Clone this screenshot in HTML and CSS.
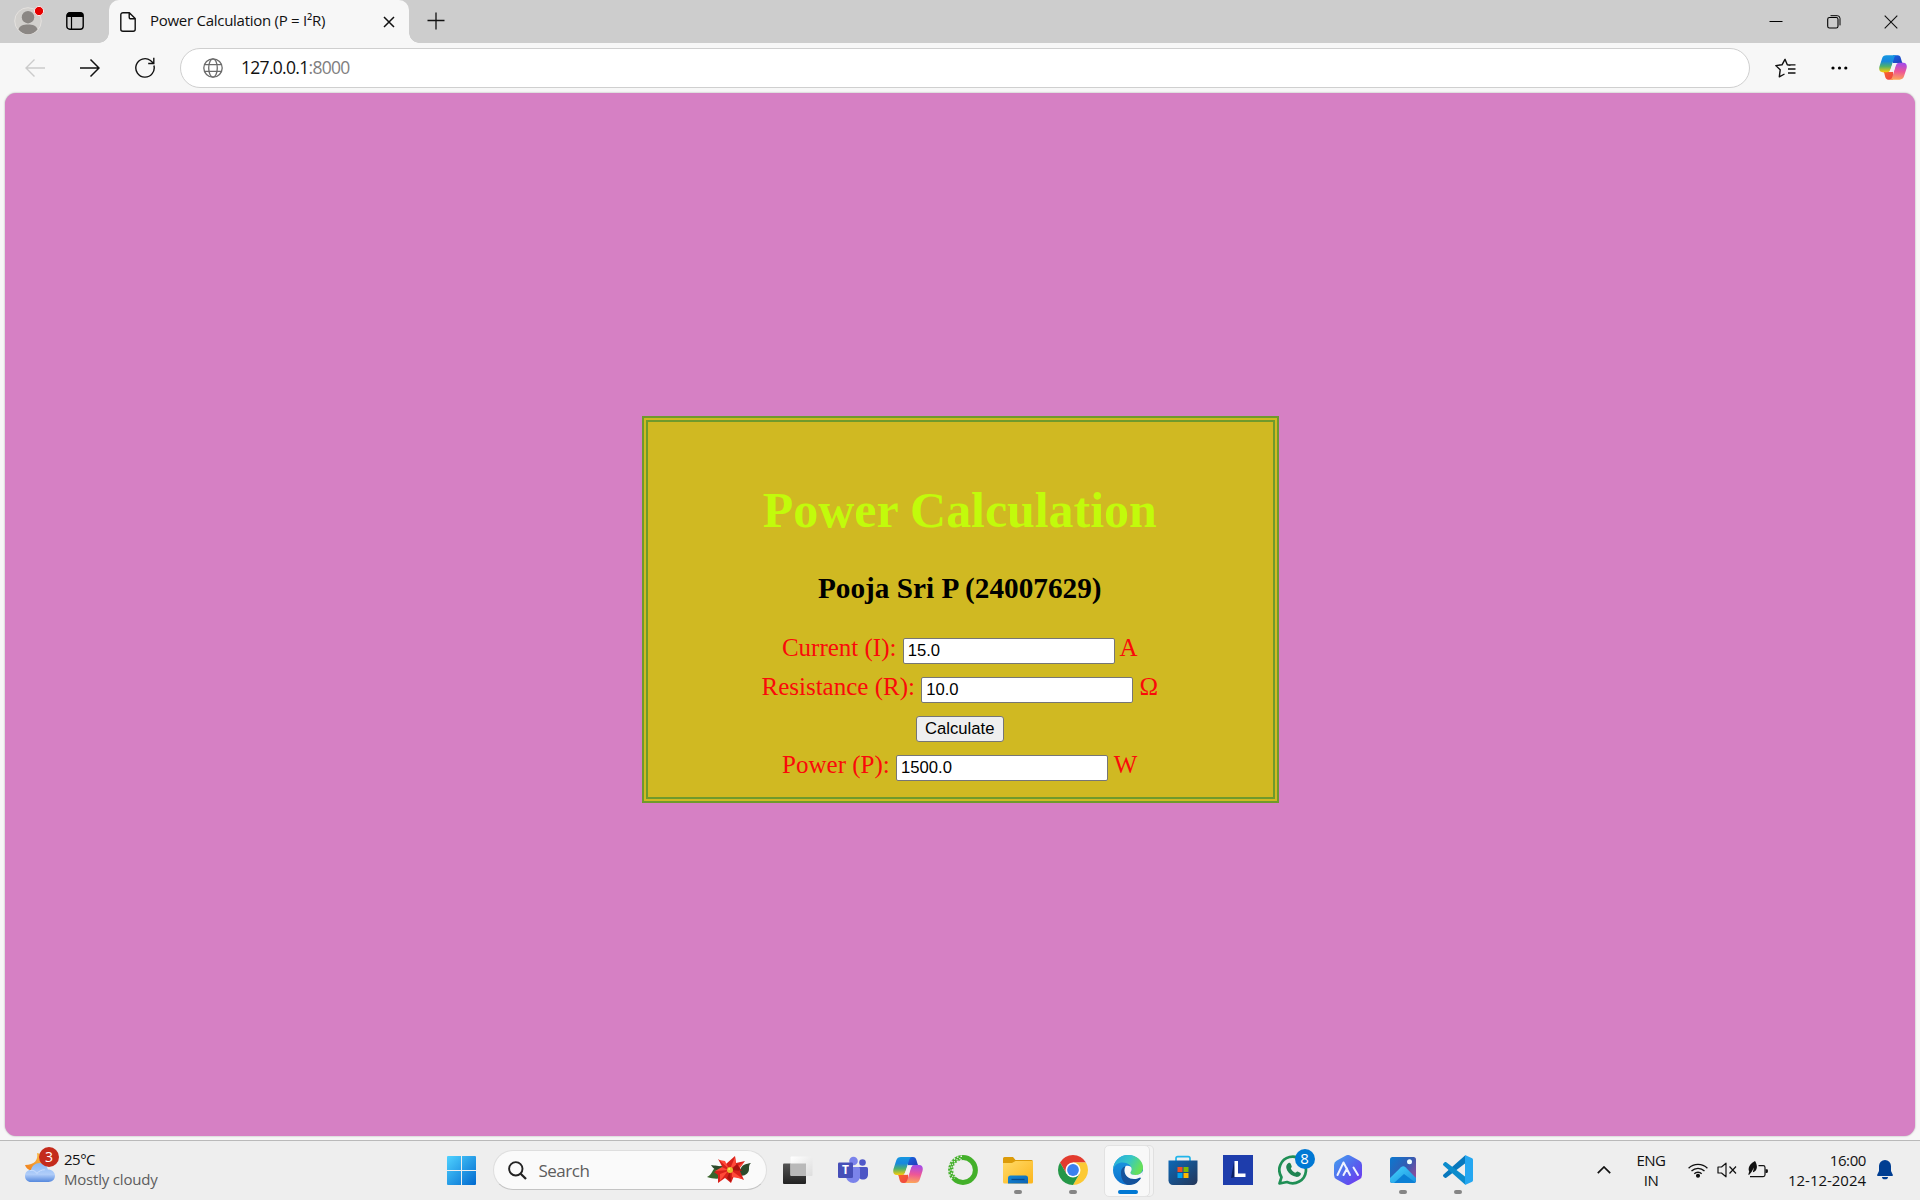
FILE: index.html
```html
<!DOCTYPE html>
<html lang="en">
<head>
<meta charset="utf-8">
<title>Power Calculation (P = I²R)</title>
<link rel="stylesheet" href="styles.css">
</head>
<body>
<svg class="defs" width="0" height="0" aria-hidden="true">
  <defs>
    <linearGradient id="cpBlue" x1="0" y1="0" x2="0" y2="1"><stop offset="0" stop-color="#1698e0"/><stop offset=".35" stop-color="#1787df"/><stop offset=".65" stop-color="#4cb06d"/><stop offset="1" stop-color="#fccb08"/></linearGradient>
    <linearGradient id="cpPink" x1=".4" y1="0" x2=".3" y2="1"><stop offset="0" stop-color="#a54ce8"/><stop offset=".5" stop-color="#ee5697"/><stop offset="1" stop-color="#fda957"/></linearGradient>
    <linearGradient id="cpNavy" x1="0" y1="0" x2="1" y2="1"><stop offset="0" stop-color="#1764e0"/><stop offset="1" stop-color="#2339b5"/></linearGradient>
    <linearGradient id="cpRed" x1="0" y1="0" x2="1" y2="1"><stop offset="0" stop-color="#f8672e"/><stop offset="1" stop-color="#ee4343"/></linearGradient>
    <symbol id="copilot" viewBox="0 0 30 28">
      <path d="M15 1h5c2 0 2.800 1 3.400 3l1.200 4c.4 1 .8 1.400 1.700 1.500H15z" fill="url(#cpNavy)"/>
      <path d="M15 27h-5c-2 0-2.800-1-3.400-3l-1-4c-.4-1-.8-1.400-1.700-1.500H15z" fill="url(#cpRed)"/>
      <path d="M8 1h11.500c-2 0-2.800 1.200-3.500 3.500l-3.500 11c-.7 2-1.600 3.500-4 3.500H3.800C.8 19-.4 16.500.5 13l2.700-8.500C4 2 5.500 1 8 1z" fill="url(#cpBlue)"/>
      <path d="M22 27H11c2 0 2.800-1.200 3.500-3.500l3.300-11c.7-2 1.600-3.500 4-3.500h4.400c3 0 4.200 2.500 3.300 6l-2.700 8.500C26 26 24.500 27 22 27z" fill="url(#cpPink)"/>
      <path d="M14.800 9.300H20c-1.400.5-2 1.700-2.500 3.200l-1.300 4.300c-.4 1.200-1.200 1.900-2.400 1.900h-3.200c1-.6 1.500-1.800 1.900-3.200z" fill="#f4f1f3"/>
    </symbol>
  </defs>
</svg>

<header class="tabstrip">
  <svg class="avatar" width="32" height="32" viewBox="0 0 32 32"><circle cx="16" cy="16" r="13.300" fill="#d2d0cd" stroke="#e5e2df"/><circle cx="16" cy="12.200" r="6.200" fill="#8b8784"/><path d="M6.500 24.500c1-4 4.800-5 9.500-5s8.500 1 9.500 5c-2.300 3-5.700 4.800-9.500 4.800s-7.200-1.800-9.500-4.800z" fill="#8b8784"/><circle cx="27" cy="6" r="4.600" fill="#e60000" stroke="#fbe8e8"/></svg>
  <svg class="workspace" width="18" height="18" viewBox="0 0 18 18"><rect x=".8" y=".8" width="16.400" height="16.400" rx="3" fill="none" stroke="#000" stroke-width="1.400"/><path d="M1 5V3a2.500 2.500 0 0 1 2.500-2.500h11A2.500 2.500 0 0 1 17 3v2z" fill="#000"/><path d="M5.500 5v12" stroke="#000" stroke-width="1.200"/></svg>
  <div class="tab">
    <svg width="16" height="20" viewBox="0 0 16 20"><path d="M3 .7h6.300L15.200 6.500v10.800c0 1.100-.9 2-2 2H3c-1.200 0-2.200-.9-2.200-2V2.700C.8 1.600 1.800.7 3 .7zM9.200.9v4c0 1.200.6 1.900 1.800 1.900h4" fill="none" stroke="#111" stroke-width="1.400"/></svg>
    <span class="tab-title">Power Calculation (P = I²R)</span>
    <svg class="tab-close" width="12" height="12" viewBox="0 0 12 12"><path d="M1 1l10 10M11 1L1 11" stroke="#111" stroke-width="1.500"/></svg>
  </div>
  <svg class="newtab" width="18" height="18" viewBox="0 0 18 18"><path d="M9 .5v17M.5 8.500h17" stroke="#111" stroke-width="1.300"/></svg>
  <div class="window-controls">
    <svg width="14" height="14" viewBox="0 0 14 14"><path d="M.5 6.500h13" stroke="#000"/></svg>
    <svg width="14" height="14" viewBox="0 0 14 14"><rect x=".7" y="2.500" width="10.300" height="10.500" rx="1.800" fill="none" stroke="#000" stroke-width="1.100"/><path d="M3.500.7h6.800a2.700 2.700 0 0 1 2.700 2.700v7" fill="none" stroke="#000"/></svg>
    <svg width="14" height="14" viewBox="0 0 14 14"><path d="M.7 .7l12.600 12.600M13.300.7L.7 13.300" stroke="#111" stroke-width="1.100"/></svg>
  </div>
</header>

<nav class="toolbar">
  <svg width="20" height="20" viewBox="0 0 20 20"><path d="M20 10H1M9.500 1.500L1 10l8.500 8.500" fill="none" stroke="#cbcbcb" stroke-width="1.400"/></svg>
  <svg width="20" height="20" viewBox="0 0 20 20"><path d="M0 10h19M10.500 1.500L19 10l-8.500 8.500" fill="none" stroke="#111" stroke-width="1.500"/></svg>
  <svg width="20" height="21" viewBox="0 0 20 21"><path d="M18.900 8.500A9.200 9.200 0 1 1 15.500 3.500L18.500 6.200M18.800.8v5.700h-5.600" fill="none" stroke="#111" stroke-width="1.400"/></svg>
  <div class="address">
    <svg width="20" height="20" viewBox="0 0 20 20" fill="none" stroke="#6b6b6b" stroke-width="1.300"><circle cx="10" cy="10" r="9.200"/><ellipse cx="10" cy="10" rx="4.300" ry="9.200"/><path d="M1.500 6.600h17M1.500 13.400h17"/></svg>
    <span class="url">127.0.0.1<span class="port">:8000</span></span>
  </div>
  <svg class="fav" width="21" height="20" viewBox="0 0 21 20" fill="none" stroke="#111" stroke-width="1.400" stroke-linejoin="round"><path d="M15.500 7.300l-3.200-.6L10 1.300 7 6.800l-6.200.8 4.400 4.200-.9 7L9.500 16M12.700 6.900H20.500M13 11h7.500M13 15h7.500"/></svg>
  <svg class="dots" width="17" height="4" viewBox="0 0 17 4"><circle cx="2" cy="2" r="1.600"/><circle cx="8.500" cy="2" r="1.600"/><circle cx="14.800" cy="2" r="1.600"/></svg>
  <svg class="copilot-side" width="28" height="27"><use href="#copilot" width="28" height="27"/></svg>
</nav>

<main class="viewport">
  <section class="card">
    <h1>Power Calculation</h1>
    <h3>Pooja Sri P (24007629)</h3>
    <form>
      <div class="row">Current (I): <input type="text" value="15.0"> A</div>
      <div class="row">Resistance (R): <input type="text" value="10.0"> Ω</div>
      <div class="row"><button type="button">Calculate</button></div>
      <div class="row">Power (P): <input type="text" value="1500.0"> W</div>
    </form>
  </section>
</main>

<footer class="taskbar">
  <div class="weather">
    <div class="weather-icon">
      <svg width="30" height="30" viewBox="0 0 30 30"><defs><linearGradient id="moon" x1="1" y1="0" x2="0" y2="1"><stop offset="0" stop-color="#fcc34c"/><stop offset="1" stop-color="#ef7d1a"/></linearGradient><linearGradient id="cloud" x1="0" y1="0" x2="0" y2="1"><stop offset="0" stop-color="#8bb9f5"/><stop offset=".6" stop-color="#b0cdf9"/><stop offset="1" stop-color="#5588dd"/></linearGradient></defs><path d="M12 0c1.500 7-2.500 12-12 12 1.500 4 5 6 10 6 7 0 12-6 10-12-1.500-3.500-4-5.500-8-6z" fill="url(#moon)"/><path d="M6 29c-3.500 0-6-2.500-6-6s2.500-6.200 6-6c.8-4 4.200-7 8.700-7s7.500 2.800 8.200 6.500c4 0 7.100 2.500 7.100 6.300S27 29 23.500 29z" fill="url(#cloud)"/><path d="M5 17.500c3-.6 5.600.5 6.800 3 2.200-2.500 5-3.800 8-3.700" fill="none" stroke="#d1e2ff" stroke-width=".8"/></svg>
      <span class="alert">3</span>
    </div>
    <div class="weather-text"><span>25°C</span><span class="muted">Mostly cloudy</span></div>
  </div>
  <svg class="start" width="29" height="29" viewBox="0 0 29 29"><defs><linearGradient id="win" gradientUnits="userSpaceOnUse" x1="0" y1="0" x2="29" y2="29"><stop offset="0" stop-color="#4fd2ff"/><stop offset="1" stop-color="#0069cf"/></linearGradient></defs><path d="M1 0h13v14H0V1a1 1 0 0 1 1-1zM15 0h13a1 1 0 0 1 1 1v13H15zM0 15h14v14H1a1 1 0 0 1-1-1zM15 15h14v13a1 1 0 0 1-1 1H15z" fill="url(#win)"/></svg>
  <div class="search">
    <svg width="19" height="19" viewBox="0 0 19 19" fill="none" stroke="#222"><circle cx="7.800" cy="7.800" r="6.700" stroke-width="1.900"/><path d="M12.700 12.700l5.300 5.300" stroke-width="2.300"/></svg>
    <span>Search</span>
    <svg class="flower" width="44" height="28" viewBox="0 0 44 28"><path d="M0 21c5-2 5-7 8-9 3-1 6-3 9-2l1 10c-6 4-11 3-18 1z" fill="#38652c"/><path d="M4 9c4 1 8 0 12 3l-3 3c-3-1-7-2-9-6zM44 7c-5 1-8 1-10 5l-3 7c6 2 11-1 11-6 0-3 0-4 2-6z" fill="#2d4a2b"/><path d="M11 3l8 5 9-8 1 7 9-2-6 8 5 11-10-4-3 7-6-5-7 5v-8L7 16l9-4z" fill="#d9201a"/><path d="M12 4l10 9-4-8zM28 1l-5 12 6-4zM37 6l-12 8 6 0zM36 23L25 15l0 6zM13 25l8-10-8 3zM8 15l13-1-6-3z" fill="#ff4938"/><path d="M24 26l-1-11-3 7zM30 8l-6 6 11 1z" fill="#a9120e"/><circle cx="23" cy="14" r="3" fill="#e6bd2d"/><circle cx="22.200" cy="13" r="1" fill="#f8ed69"/></svg>
  </div>
  <div class="apps">
    <div class="app"><svg width="30" height="30" viewBox="0 0 30 30"><defs><linearGradient id="tvD" x1="0" y1="0" x2="0" y2="1"><stop offset="0" stop-color="#555"/><stop offset="1" stop-color="#222"/></linearGradient><linearGradient id="tvL" x1="0" y1="0" x2="1" y2="1"><stop offset="0" stop-color="#fff"/><stop offset="1" stop-color="#ddd"/></linearGradient></defs><rect x="0" y="8.500" width="23" height="20.500" rx="1" fill="url(#tvD)"/><rect x="7.500" y="1.500" width="22" height="19.500" rx="1" fill="url(#tvL)"/><path d="M7.500 8.500H23V21H8.500a1 1 0 0 1-1-1z" fill="#b9b9b9"/></svg></div>
    <div class="app"><svg width="30" height="30" viewBox="0 0 30 30"><circle cx="24.500" cy="7.500" r="3.300" fill="#5059c9"/><circle cx="15.500" cy="6" r="4.300" fill="#7b83eb"/><path d="M20 12h8.500a1.500 1.500 0 0 1 1.500 1.500v6c0 3-2 5-5 5s-5-2-5-5z" fill="#4d56c5"/><path d="M9 12h11.500a1.500 1.500 0 0 1 1.500 1.500V21c0 4-3 7-6.700 7S8 25 8 21z" fill="#7b83eb"/><rect x="0" y="7.500" width="15" height="15.500" rx="1.300" fill="#464eb8"/><text class="teams-t" x="7.500" y="19.200">T</text></svg></div>
    <div class="app"><svg width="30" height="28"><use href="#copilot" width="30" height="28"/></svg></div>
    <div class="app"><svg width="30" height="30" viewBox="0 0 30 30" fill="none" stroke="#43b02a"><circle cx="15" cy="15" r="12.400" stroke-width="5"/><path d="M14 1.200A13.900 13.900 0 0 0 5 25" stroke="#eee" stroke-width="1.500" stroke-dasharray="1.600 2"/><path d="M14 3.200A11.900 11.900 0 0 0 6.500 23.500" stroke="#eee" stroke-width="1.200" stroke-dasharray="1.200 1.900" stroke-dashoffset="1.500"/><path d="M14 4.900A10.200 10.200 0 0 0 7.500 22" stroke="#eee" stroke-width="1.400" stroke-dasharray="2 1.500"/></svg></div>
    <div class="app running"><svg width="30" height="30" viewBox="0 0 30 30"><defs><linearGradient id="fold" x1="0" y1="0" x2="1" y2="1"><stop offset="0" stop-color="#ffda68"/><stop offset="1" stop-color="#fcb51b"/></linearGradient><linearGradient id="fb" x1="0" y1="0" x2="1" y2="1"><stop offset="0" stop-color="#1287d5"/><stop offset="1" stop-color="#0e63b4"/></linearGradient></defs><path d="M0 3.500A1.500 1.500 0 0 1 1.500 2H10l2.500 3H28.500A1.500 1.500 0 0 1 30 6.500V14H0z" fill="#dc9b09"/><path d="M0 8h9l3.500-2H30v21a1.500 1.500 0 0 1-1.500 1.500h-27A1.500 1.500 0 0 1 0 27z" fill="url(#fold)"/><path d="M5 28.500V23a2.500 2.500 0 0 1 2.500-2.500h15A2.500 2.500 0 0 1 25 23v5.500z" fill="url(#fb)"/><path d="M8.500 24.500h13" stroke="#07498a" stroke-width="1.300"/></svg></div>
    <div class="app running"><svg width="30" height="30" viewBox="0 0 30 30"><path d="M2.010 7.500A15 15 0 0 1 27.990 7.500H15L8.500 18.750z" fill="#e33b2e"/><path d="M27.990 7.500A15 15 0 0 1 15 30l6.500-11.250L15 7.500z" fill="#fcc934"/><path d="M15 30A15 15 0 0 1 2.010 7.500L8.500 18.750h13z" fill="#249747"/><circle cx="15" cy="15" r="7.500" fill="#fff"/><circle cx="15" cy="15" r="5.900" fill="#3c81f0"/></svg></div>
    <div class="app active"><svg width="30" height="30" viewBox="0 0 30 30"><defs><linearGradient id="eA" x1="0" y1="0" x2="1" y2=".4"><stop offset="0" stop-color="#26a9df"/><stop offset=".55" stop-color="#35c6c8"/><stop offset="1" stop-color="#66e05a"/></linearGradient><linearGradient id="eB" x1="0" y1="0" x2="0" y2="1"><stop offset="0" stop-color="#1b9ce2"/><stop offset="1" stop-color="#0c70ce"/></linearGradient></defs><circle cx="15" cy="15" r="15" fill="url(#eB)"/><path d="M0 14.500C1 5.500 7 0 15 0c9 0 15 6 15 12.500 0 5-3.600 7.500-7.500 7.500-3 0-5-1-5-2.300 0-1 1.200-1.700 1.200-3.700 0-3.500-4-6.500-9-6.500C5 7.500 1.500 10 0 14.500z" fill="url(#eA)"/><path d="M8 18c0-4 2-6 4.700-7-.9 1.500-1.200 3-1.200 4.500 0 5 4.500 8.500 9.500 8.500 2.800 0 4.500-.7 6-1.500.8-.4 1.300.2.800 1C25.500 27.200 21 30 16.500 30 11 30 8 24 8 18z" fill="#14529b"/><path d="M12.500 11.200c3-1 6.200.4 6.200 2.800 0 2-1.200 2.700-1.200 3.700 0 1.300 2 2.300 5 2.300 3 0 6-1.500 7.200-4 .6 3-.2 5.300-1.700 7.500-.3-1-.6-.9-1-1-1.500.8-3.200 1.500-6 1.500-5 0-9.500-3.500-9.500-8.500 0-1.500.3-2.900 1-4.300z" fill="#f7f7f7"/></svg></div>
    <div class="app"><svg width="30" height="30" viewBox="0 0 30 30"><defs><linearGradient id="st" x1="0" y1="0" x2="1" y2="1"><stop offset="0" stop-color="#0d68b6"/><stop offset="1" stop-color="#243659"/></linearGradient></defs><path d="M8 6V3.500C8 2.400 8.600 1.700 9.700 1.700h10.600c1.100 0 1.700.7 1.700 1.800V6" fill="none" stroke="#22b5ea" stroke-width="1.700"/><path d="M.5 5.500h29v20c0 2.500-2 4.500-4.500 4.500H5C2.500 30 .5 28 .5 25.500z" fill="url(#st)"/><path d="M9.500 12h5v5h-5z" fill="#f25022"/><path d="M15.500 12h5v5h-5z" fill="#7fba00"/><path d="M9.500 18h5v5h-5z" fill="#00a4ef"/><path d="M15.500 18h5v5h-5z" fill="#ffb900"/></svg></div>
    <div class="app"><svg width="30" height="30" viewBox="0 0 30 30"><path d="M0 0h30v30H0z" fill="#1e3dac"/><path d="M11 7L8 23l5-1z" fill="#0a1f63"/><path d="M11.500 6H15v12.500h7.500V22h-11z" fill="#fff"/></svg></div>
    <div class="app whatsapp"><svg width="30" height="30" viewBox="0 0 30 30"><path d="M1.500 28.500l2-6.300A13.300 13.300 0 1 1 9 27z" fill="#eee" stroke="#1f8f55" stroke-width="2.700" stroke-linejoin="round"/><path d="M10.500 8c.8-.6 1.800-.3 2.200.7l1 2.500c.3.900-.9 1.800-.9 2.400.8 1.800 2.500 3.300 4.300 4.100.8.200 1.500-1.500 2.500-1.200l2.600 1.300c.9.500.9 1.300.3 2.200-1.500 2.300-4.300 2.300-7 1.100-3.600-1.600-6.500-4.700-7.200-8.100-.3-2 .3-3.900 2.200-5z" fill="#1f8351"/></svg><span class="count">8</span></div>
    <div class="app"><svg width="30" height="30" viewBox="0 0 30 30"><defs><linearGradient id="hex" x1="0" y1="0" x2="1" y2="1"><stop offset="0" stop-color="#43a3ee"/><stop offset=".55" stop-color="#5661ee"/><stop offset="1" stop-color="#7430f0"/></linearGradient></defs><path d="M12.500.7a5 5 0 0 1 5 0l9 5A5 5 0 0 1 29 10v10a5 5 0 0 1-2.500 4.300l-9 5a5 5 0 0 1-5 0l-9-5A5 5 0 0 1 1 20V10a5 5 0 0 1 2.500-4.300z" fill="url(#hex)"/><path d="M4.500 20L10.500 7.500 17 20M10.500 20l3.500-6.500M20.500 12.500l4.500 7.500" fill="none" stroke="#eff3ff" stroke-width="2" stroke-linecap="round" stroke-linejoin="round"/></svg></div>
    <div class="app running"><svg width="26" height="26" viewBox="0 0 26 26"><defs><linearGradient id="phA" x1="0" y1="0" x2="1" y2=".7"><stop offset="0" stop-color="#0b79d0"/><stop offset=".6" stop-color="#355bb1"/><stop offset="1" stop-color="#8d4c9c"/></linearGradient><linearGradient id="phB" x1="0" y1="0" x2="1" y2="1"><stop offset="0" stop-color="#47d6ff"/><stop offset="1" stop-color="#168cdc"/></linearGradient><clipPath id="phC"><rect width="26" height="26" rx="2.500"/></clipPath></defs><g clip-path="url(#phC)"><path d="M0 0h26v26H0z" fill="url(#phA)"/><path d="M-1 22L11 10.300c1.500-1.300 3.100-1.300 4.500 0L27 22v5H-1z" fill="url(#phB)"/><path d="M4 26l10-9 12 9z" fill="#0b80d5"/><circle cx="19.500" cy="4.700" r="2.500" fill="#eff"/></g></svg></div>
    <div class="app running"><svg width="30" height="30" viewBox="0 0 30 30"><path d="M22 .5v8L3.300 22.700c-.6.500-1.400.4-1.900-.1l-1-1c-.6-.6-.5-1.400.1-2z" fill="#0878bd"/><path d="M22 29.500v-8L3.300 7.300c-.6-.5-1.400-.4-1.900.1l-1 1c-.6.6-.5 1.400.1 2z" fill="#0c8ccc"/><path d="M22 0l6.600 3c.9.400 1.400 1 1.400 2v20c0 1-.5 1.600-1.400 2L22 30z" fill="#25a7f1"/></svg></div>
  </div>
  <div class="tray">
    <svg width="14" height="8" viewBox="0 0 14 8"><path d="M.8 7.200L7 1l6.200 6.200" fill="none" stroke="#111" stroke-width="1.700"/></svg>
    <div class="lang"><span>ENG</span><span>IN</span></div>
    <svg class="wifi" width="20" height="16" viewBox="0 0 20 16" fill="none" stroke="#111" stroke-width="1.300"><path d="M.6 6.200a13.300 13.300 0 0 1 18.800 0M3.500 9a9.200 9.200 0 0 1 13 0M6.300 11.800a5.200 5.200 0 0 1 7.400 0"/><circle cx="10" cy="13.800" r="1.400" fill="#111"/></svg>
    <svg class="sound" width="20" height="16" viewBox="0 0 20 16" fill="none" stroke="#111" stroke-width="1.200"><path d="M1 5h3.500L9 1.200v13.600L4.500 11H1z" stroke-linejoin="round"/><path d="M12.500 4.500l6.500 7M19 4.500l-6.500 7"/></svg>
    <svg class="battery" width="20" height="18" viewBox="0 0 20 18"><path d="M10.500 4.600h4.700A1.800 1.800 0 0 1 17 6.400v7.400a1.800 1.800 0 0 1-1.800 1.800H2" fill="none" stroke="#111" stroke-width="1.200"/><path d="M17.500 8.200h1.200c.8 0 1.200.5 1.200 1.200v1.400c0 .7-.4 1.200-1.200 1.200h-1.200z" fill="#111"/><path d="M7 0c1.500 2.500 2.600 5.500 1.400 8.200-.7 1.700-2.200 2.800-3.600 3L6 6.500 3.500 11 1 14l-.7-.5L1.200 10.500C-.5 7 1.500 3 7 0z" fill="#111"/></svg>
    <div class="clock"><span>16:00</span><span>12-12-2024</span></div>
    <svg class="bell" width="16" height="20" viewBox="0 0 16 20"><path d="M8 0a6 6 0 0 1 6 6v5l1.800 3.800c.3.700 0 1.200-.7 1.200H.9c-.7 0-1-.5-.7-1.200L2 11V6a6 6 0 0 1 6-6zM5 17h6a3 2.300 0 0 1-6 0z" fill="#003e92"/></svg>
  </div>
</footer>
</body>
</html>
```

FILE: styles.css
```css
* { box-sizing: border-box; }

body {
  margin: 0;
  width: 1920px;
  height: 1200px;
  overflow: hidden;
  display: flex;
  flex-direction: column;
  background: #f7f7f7;
  color: #111;
  font-family: "Open Sans", "Noto Sans", sans-serif;
  font-size: 15px;
}

svg { display: block; flex: none; }
.defs { position: absolute; }

/* Tab strip */
.tabstrip {
  display: flex;
  flex: none;
  height: 43px;
  background: #cdcdcd;
  align-items: flex-start;
}
.avatar { margin: 5px 0 0 12px; }
.workspace { margin: 12px 0 0 22px; }
.tab {
  position: relative;
  display: flex;
  align-items: flex-start;
  width: 300px;
  height: 43px;
  margin-left: 25px;
  padding: 12px 14px 0 11px;
  background: #f7f7f7;
  border-radius: 10px 10px 0 0;
}
.tab::before,
.tab::after {
  content: "";
  position: absolute;
  bottom: 0;
  width: 10px;
  height: 10px;
}
.tab::before { left: -10px; background: radial-gradient(circle at 0 0, transparent 9.500px, #f7f7f7 10px); }
.tab::after { right: -10px; background: radial-gradient(circle at 100% 0, transparent 9.500px, #f7f7f7 10px); }
.tab-title {
  margin-left: 14px;
  line-height: 16px;
  font-size: 15px;
  letter-spacing: -0.27px;
  white-space: nowrap;
}
.tab-close { margin: 4px 0 0 auto; }
.newtab { margin: 12px 0 0 17.500px; }
.window-controls {
  display: flex;
  gap: 43.500px;
  margin: 14.500px 22px 0 auto;
}

/* Navigation bar */
.toolbar {
  display: flex;
  flex: none;
  align-items: center;
  height: 50px;
  padding: 0 13px 1px 25px;
  gap: 35px;
}
.address {
  display: flex;
  align-items: center;
  width: 1570px;
  height: 40px;
  margin: 1px 0 0 -10px;
  padding-left: 22px;
  border: 1px solid #cfcfcf;
  border-radius: 20px;
  background: #fff;
}
.url {
  margin-left: 18px;
  padding-bottom: 2px;
  font-size: 17.500px;
  letter-spacing: -0.7px;
}
.port { color: #808080; }
.fav { margin-left: -10.500px; }
.dots { fill: #000; }
.copilot-side { margin-left: -3.500px; }

/* Page */
.viewport {
  flex: none;
  width: 1910px;
  height: 1043px;
  margin: 0 5px;
  padding-top: 323px;
  border-radius: 11px;
  background: #d680c4;
  box-shadow: 0 0 2px rgba(0, 0, 0, 0.35);
}
.card {
  width: 637px;
  height: 387px;
  margin: 0 636px 0 637px;
  padding: 59px 1.500px 0 0;
  border: 6px double #6f9a2c;
  background: #d0b922;
  color: #fa0a0a;
  font-family: "Liberation Serif", serif;
  font-size: 25px;
  text-align: center;
}
h1 {
  margin: 0 0 33px;
  font-size: 50px;
  line-height: 58px;
  letter-spacing: -0.06px;
  color: #c2fb0b;
}
h3 {
  margin: 0 0 23px;
  font-size: 29.250px;
  line-height: 33px;
  color: #000;
}
.row {
  height: 39px;
  padding-top: 5px;
  line-height: 29px;
}
input,
button {
  height: 26px;
  border: 1px solid #767676;
  border-radius: 2px;
  font-family: "Liberation Sans", sans-serif;
  font-size: 16.667px;
  color: #000;
}
input { width: 212px; padding: 1px 4px; background: #fff; }
button { width: 88px; padding: 0; border-radius: 3px; background: #efefef; }

/* Taskbar */
.taskbar {
  display: flex;
  align-items: center;
  height: 60px;
  margin-top: auto;
  padding: 0 27px 1px 25px;
  border-top: 1px solid #b9b9b9;
  background: #eee;
}
.weather { display: flex; width: 422px; }
.weather-icon { position: relative; width: 30px; padding-top: 3px; }
.alert,
.count {
  position: absolute;
  width: 20px;
  height: 20px;
  border-radius: 50%;
  background: #c42b1c;
  color: #fff;
  font-size: 14px;
  line-height: 19px;
  text-align: center;
}
.alert { left: 14px; top: -3px; }
.weather-text,
.lang,
.clock { display: flex; flex-direction: column; line-height: 20px; font-size: 15px; }
.weather-text { margin: -1px 0 1px 9px; letter-spacing: -0.2px; }
.weather-text span:first-child { letter-spacing: -0.5px; }
.muted { color: #5d5d5d; }
.search {
  display: flex;
  align-items: center;
  width: 274px;
  height: 40px;
  margin-left: 17px;
  padding: 0 15.500px 0 13.500px;
  border: 1px solid #dedede;
  border-bottom-color: #c4c4c4;
  border-radius: 20px;
  background: #fafafa;
  color: #5d5d5d;
  font-size: 17px;
}
.search span { margin-left: 12px; letter-spacing: -0.5px; }
.flower { margin-left: auto; }
.apps { display: flex; margin-left: 3.500px; }
.app {
  position: relative;
  display: flex;
  align-items: center;
  justify-content: center;
  width: 55px;
  height: 58px;
}
.app svg { position: relative; }
.running::after,
.active::after {
  content: "";
  position: absolute;
  left: 23.500px;
  top: 49px;
  width: 8px;
  height: 4px;
  border-radius: 2px;
  background: #858585;
}
.active::after { left: 17.500px; width: 20px; background: #0078d4; }
.active::before {
  content: "";
  position: absolute;
  left: 3.500px;
  top: 4px;
  width: 44px;
  height: 50px;
  border: 1px solid #e2e2e2;
  border-radius: 5px;
  background: #f8f8f8;
  box-shadow: 4px 0 0 -1px #f3f3f3, 4px 0 0 0 #e0e0e0;
}
.count { left: 29px; top: 8px; background: #0078d4; font-size: 15px; }
.teams-t {
  fill: #fff;
  font: 700 12px "Open Sans", sans-serif;
  text-anchor: middle;
}
.tray { display: flex; align-items: center; margin-left: auto; }
.tray > svg:first-child { margin-right: 1px; }
.lang { width: 40px; margin-left: 19px; align-items: center; letter-spacing: -0.5px; }
.wifi { margin-left: 17px; }
.sound { margin-left: 9px; }
.battery { margin-left: 11px; }
.clock { width: 78px; margin: -1px 0 0 20px; align-items: flex-end; white-space: nowrap; letter-spacing: -0.03px; }
.clock span:first-child { letter-spacing: -0.4px; }
.bell { margin-left: 11px; }
```
